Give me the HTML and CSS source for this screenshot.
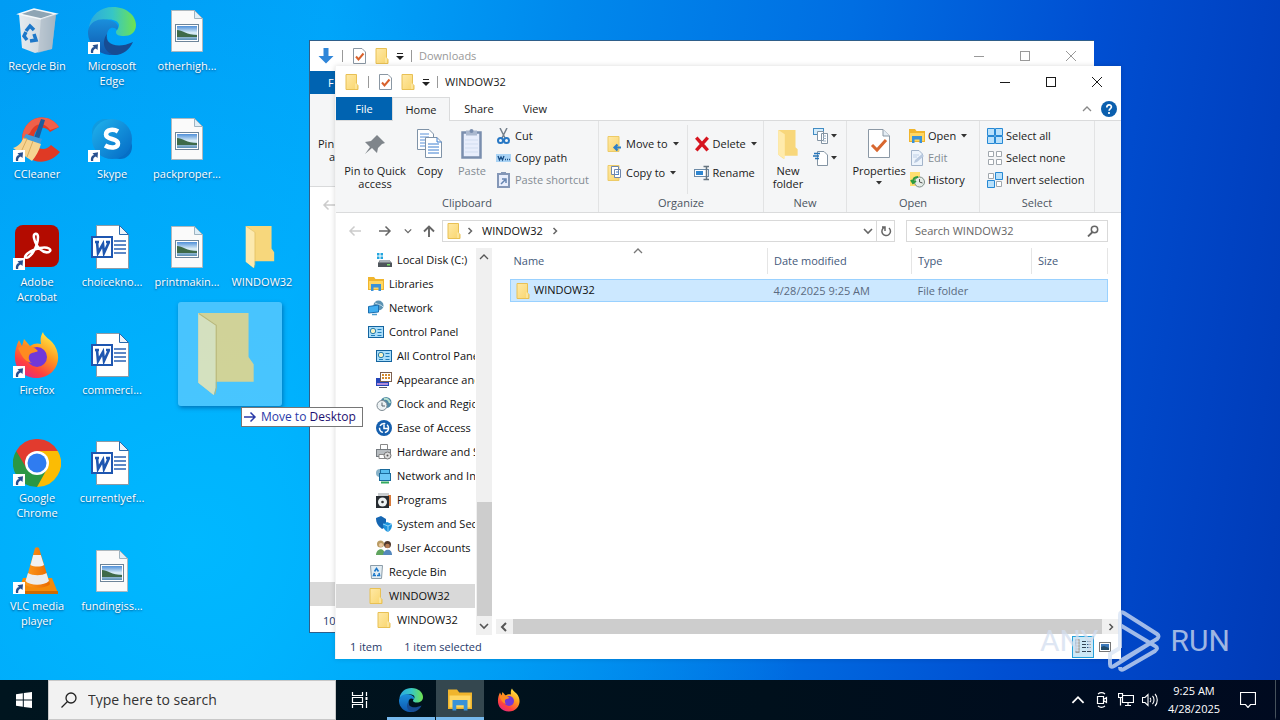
FILE: index.html
```
<!DOCTYPE html>
<html lang="en">
<head>
<meta charset="utf-8">
<title>Desktop</title>
<link rel="stylesheet" href="styles.css">
</head>
<body>
<svg class="defs" aria-hidden="true">
<defs>
<linearGradient id="gFold" x1="0" y1="0" x2="1" y2="1"><stop offset="0" stop-color="#ffe9a6"/><stop offset="1" stop-color="#f9d56c"/></linearGradient>
<linearGradient id="gBin" x1="0" y1="0" x2="1" y2="0"><stop offset="0" stop-color="#e6ecf0"/><stop offset="0.55" stop-color="#d3dbe1"/><stop offset="1" stop-color="#9fb4c3"/></linearGradient>
<linearGradient id="gEdgeA" x1="0" y1="0.3" x2="1" y2="0.3"><stop offset="0" stop-color="#2ba9df"/><stop offset="0.5" stop-color="#36c6c6"/><stop offset="1" stop-color="#6fe34f"/></linearGradient>
<linearGradient id="gEdgeB" x1="0" y1="0" x2="0" y2="1"><stop offset="0" stop-color="#1a8fdc"/><stop offset="1" stop-color="#0f57ad"/></linearGradient>
<linearGradient id="gSky" x1="0" y1="0" x2="0" y2="1"><stop offset="0" stop-color="#4f8fd8"/><stop offset="0.5" stop-color="#dff0f8"/><stop offset="1" stop-color="#5a8fb5"/></linearGradient>
<linearGradient id="gFox" x1="0.8" y1="0" x2="0.2" y2="1"><stop offset="0" stop-color="#fff04a"/><stop offset="0.4" stop-color="#ff9a1f"/><stop offset="0.75" stop-color="#ff4040"/><stop offset="1" stop-color="#e0258c"/></linearGradient>
<linearGradient id="gSkype" x1="0" y1="0" x2="1" y2="1"><stop offset="0" stop-color="#20b4ee"/><stop offset="1" stop-color="#0468c4"/></linearGradient>
<linearGradient id="gCone" x1="0" y1="0" x2="1" y2="0"><stop offset="0" stop-color="#ff9a1c"/><stop offset="1" stop-color="#e96a00"/></linearGradient>
</defs>
<symbol id="arrowbadge" viewBox="0 0 12 12"><rect width="12" height="12" fill="#fff"/><path d="M3 11C2.500 7 4 5.500 6 5L4.500 3.200 10 2.200 9.500 8 7.800 6.500C5.500 7.500 5 8.500 5.200 11Z" fill="#28508f"/></symbol>
<symbol id="bin" viewBox="0 0 48 48"><path d="M6 7 21 2l22 5-4 35-17 4-13-5Z" fill="url(#gBin)"/><path d="M6 7 21 2l22 5-15 5Z" fill="#8ea5b4" stroke="#f4f8fa" stroke-width="1.500"/><path d="M28 12l15-5-4 35-14 4Z" fill="#a8b7c2" opacity=".55"/><path d="M13 24l4-5 4 4M21 27l2 6-6 1M14 33l-3-4 2-4" fill="none" stroke="#1d78c9" stroke-width="3.500"/></symbol>
<symbol id="edge" viewBox="0 0 48 48"><path d="M1 20C3 8 12 0 25 0c14 0 23 9 23 18 0 8-6 11-12 11-5 0-8-1-8-4 0-2 3-3 3-7C30 12 17 9 1 20Z" fill="url(#gEdgeA)"/><path d="M0 24C2 13 13 11 21 13c8 2 11 6 8 10-3-4-10-3-10 6 0 8 6 15 12 18C14 52-1 39 0 24Z" fill="url(#gEdgeB)"/><path d="M19 27c-3 9 9 16 26 8-3 7-10 13-18 13C16 46 13 35 19 27Z" fill="#174c93"/></symbol>
<symbol id="imgdoc" viewBox="0 0 32 42"><path d="M0.500 0.500H23.500L31.500 8.500V41.500H.5Z" fill="#fafafa" stroke="#aeb8be"/><path d="M23.500.5V8.500H31.500Z" fill="#dfeef7" stroke="#9fb3c0"/><rect x="4.500" y="14.500" width="23" height="17" fill="#fff" stroke="#6d8499"/><rect x="6" y="16" width="20" height="14" fill="url(#gSky)"/><path d="M6 20c5 0 10 5 20 5v2H6Z" fill="#3e6a48"/></symbol>
<symbol id="worddoc" viewBox="0 0 38 44"><path d="M5.500.5H28.500L37.500 9.500V43.500H5.500Z" fill="#fff" stroke="#8d9aa6"/><path d="M28.500.5V9.500H37.500Z" fill="#edf3f8" stroke="#2b6aab"/><path d="M23 16h12M23 20h12M23 24h12M23 28h12" stroke="#2a62b4" stroke-width="1.300"/><rect x="1" y="12" width="20" height="20" fill="#fff" stroke="#1e56b0" stroke-width="2"/><path d="M4 17h4M6 17l1 11 5-9 1 9 5-11M15 17h4" fill="none" stroke="#1e56b0" stroke-width="2.600"/></symbol>
<symbol id="cc" viewBox="0 0 48 48"><path d="M46 12C36-4 10 0 9 24s24 30 38 13l-9-7c-7 8-17 3-17-7s10-14 16-6Z" fill="#df3a25"/><path d="M46 12C36-4 10 0 9 24l8-6c4-10 14-12 20-3Z" fill="#f0604a"/><path d="M28 4l4 1-6 19-5-1Z" fill="#1d5c9c"/><path d="M13 19l16 5-2 5-17-5Z" fill="#3f9bdd"/><path d="M10 23l18 6c-2 7-5 12-9 17L0 33c6-2 9-6 10-10Z" fill="#f6d491"/><path d="M10 23l4 1L8 37M20 26l-6 16" stroke="#d9ab5d" fill="none"/></symbol>
<symbol id="skype" viewBox="0 0 48 48"><circle cx="17" cy="17" r="13" fill="#109be0"/><circle cx="32" cy="32" r="12" fill="#066fc5"/><circle cx="24" cy="24" r="20" fill="url(#gSkype)"/><path d="M30 16.500c-4-2.500-12-2.500-12 3 0 6 12 3 12 9 0 5-8 5-13 2" fill="none" stroke="#fff" stroke-width="4.500"/></symbol>
<symbol id="acro" viewBox="0 0 48 48"><rect x="2" y="2" width="44" height="42" rx="8" fill="#b30b00"/><path d="M12 34c4 4 13-10 13-20 0-5-5-4-4 1 2 9 9 16 15 14 4-2-1-6-9-4-6 1-14 5-15 9Z" fill="none" stroke="#fff" stroke-width="2.500"/></symbol>
<symbol id="fox" viewBox="0 0 48 48"><path d="M30 1c1 4 5 6 9 10 8 9 8 21 1 29-9 10-26 9-34-1C0 31 1 19 6 9l3 6 2-7 6 7c4-3 8-3 11-2-1-5 0-9 2-12Z" fill="url(#gFox)"/><circle cx="24" cy="26" r="10" fill="#7138d8"/><path d="M5 17c7-5 16-2 20 3-3 2-8 1-9 5-1 3 1 6 3 7C10 30 8 23 5 17Z" fill="#ff8b20"/></symbol>
<symbol id="chrome" viewBox="0 0 48 48"><path d="M24 24H24L44.800 12A24 24 0 0 1 24 48Z" fill="#fbbc04"/><path d="M24 24L34 30 24 48A24 24 0 0 1 3.200 12Z" fill="#2a9744"/><path d="M24 12H44.800L34 30Z" fill="#fbbc04"/><path d="M24 12H44.800A24 24 0 0 0 3.200 12L14 30Z" fill="#e23b2e"/><circle cx="24" cy="24" r="12" fill="#fff"/><circle cx="24" cy="24" r="9.500" fill="#2f7cf0"/></symbol>
<symbol id="vlc" viewBox="0 0 48 48"><path d="M10 31H39L45 46H5Z" fill="#f58a0a"/><path d="M5 44H45V47H5Z" fill="#cf6a00"/><path d="M22 1c1-1 3-1 4 0L37 37c-4 5-21 5-25 0Z" fill="url(#gCone)"/><path d="M20.200 8H27.800L31 18c-3 2-10 2-13.500 0Z" fill="#f1f1f1"/><path d="M15 26c5 3 14 3 18.500 0L36 34c-5 5-19 5-23.500 0Z" fill="#ececec"/></symbol>
<symbol id="bigfold" viewBox="0 0 54 80"><path d="M0 0H49V43L54 50V67H15V80L0 68Z" fill="#f7d77c"/><path d="M0 0L17 11V73L15 80 0 68Z" fill="#fce9ae"/><path d="M.5.5L17.500 12V73L16 79.500" fill="none" stroke="#d9b555"/></symbol>
<symbol id="fold" viewBox="0 0 16 16"><path d="M2 .5H12.500V10L14 11.500V15.500H2Z" fill="url(#gFold)" stroke="#e8c054"/><path d="M12 9.500V15" stroke="#fdf0bd"/></symbol>
<symbol id="check" viewBox="0 0 16 16"><path d="M2.500.5H11L14.500 4V15.500H2.500Z" fill="#fff" stroke="#8a97a3"/><path d="M5 8.500l2.500 3 5-6" fill="none" stroke="#d8612c" stroke-width="2"/></symbol>
<symbol id="down" viewBox="0 0 16 16"><path d="M5.500 0H10.500V8H15.500L8 15.500.5 8H5.500Z" fill="#2f86d9"/></symbol>
<symbol id="qa" viewBox="0 0 8 8"><path d="M1 1.500H7" stroke="#222"/><path d="M0 4H8L4 8Z" fill="#222"/></symbol>
<symbol id="tri" viewBox="0 0 6 4"><path d="M0 0H6L3 3.500Z" fill="#333"/></symbol>
<symbol id="min" viewBox="0 0 10 10"><path d="M0 5.500H10" stroke="currentColor"/></symbol>
<symbol id="max" viewBox="0 0 10 10"><rect x=".5" y=".5" width="9" height="9" fill="none" stroke="currentColor"/></symbol>
<symbol id="close" viewBox="0 0 10 10"><path d="M0 0L10 10M10 0L0 10" stroke="currentColor"/></symbol>
<symbol id="chevU" viewBox="0 0 10 10"><path d="M1 7l4-4 4 4" fill="none" stroke="currentColor" stroke-width="1.300"/></symbol>
<symbol id="chevD" viewBox="0 0 10 10"><path d="M1 3l4 4 4-4" fill="none" stroke="currentColor" stroke-width="1.600"/></symbol>
<symbol id="chevR" viewBox="0 0 10 10"><path d="M3.500 2L6.500 5 3.500 8" fill="none" stroke="currentColor" stroke-width="1.500"/></symbol>
<symbol id="chevL" viewBox="0 0 10 10"><path d="M7 1L3 5l4 4" fill="none" stroke="currentColor" stroke-width="2"/></symbol>
<symbol id="arrL" viewBox="0 0 14 12"><path d="M13 6H2M6.500 1.500L2 6l4.500 4.500" fill="none" stroke="currentColor" stroke-width="1.500"/></symbol>
<symbol id="arrR" viewBox="0 0 14 12"><path d="M1 6H12M7.500 1.500L12 6l-4.500 4.500" fill="none" stroke="currentColor" stroke-width="1.500"/></symbol>
<symbol id="arrU" viewBox="0 0 12 12"><path d="M6 12V1.500M1 6.500L6 1.500l5 5" fill="none" stroke="currentColor" stroke-width="1.900"/></symbol>
<symbol id="pin" viewBox="0 0 24 24"><path d="M14 3l8 8-3 1-4 4-1 5-5-5-7 6 5-7-5-5 6-1 4-4Z" fill="#7f858b"/></symbol>
<symbol id="copy" viewBox="0 0 26 30"><path d="M.5.5H12L16.500 5V20.500H.5Z" fill="#fff" stroke="#7f93a8"/><path d="M3 5h9M3 8h9M3 11h9M3 14h9M3 17h9" stroke="#5b91d8"/><path d="M8.500 8.500H20L24.500 13V28.500H8.500Z" fill="#fff" stroke="#7f93a8"/><path d="M20 8.500V13h4.500M11 15h11M11 18h11M11 21h11M11 24h11" fill="none" stroke="#3d7fd0"/></symbol>
<symbol id="paste" viewBox="0 0 22 30"><rect x="1.500" y="3.500" width="18" height="25" fill="#e8eefc" stroke="#7a8eae" stroke-width="2.500"/><path d="M5 1.500h11v5H5Z" fill="#aab8cf"/><circle cx="10.500" cy="2" r="2" fill="#7a8eae"/><path d="M4 11h13M4 15h13M4 19h13M4 23h13" stroke="#d1ddf0"/></symbol>
<symbol id="cut" viewBox="0 0 16 16"><path d="M4 0l5 10M11 0L6 10" stroke="#75818d" stroke-width="1.500"/><circle cx="4.500" cy="12.500" r="2.500" fill="none" stroke="#2777c4" stroke-width="2"/><circle cx="10.500" cy="12.500" r="2.500" fill="none" stroke="#2777c4" stroke-width="2"/></symbol>
<symbol id="path" viewBox="0 0 16 16"><rect y="4" width="15" height="8" fill="#a9d3f5"/><path d="M2 6l1.500 4L5 7l1.500 3L8 6M9 9.500h1M11 9.500h1M13 9.500h1" fill="none" stroke="#174e87" stroke-width="1.300"/></symbol>
<symbol id="pshort" viewBox="0 0 16 16"><rect x="2" y="2" width="11" height="13" fill="#e8eefc" stroke="#8497b7" stroke-width="2"/><path d="M5 0h5v3H5Z" fill="#8497b7"/><path d="M5 12l4-4M6 7h4v4" fill="none" stroke="#6584b0" stroke-width="1.500"/></symbol>
<symbol id="moveto" viewBox="0 0 16 16"><path d="M1 .5H12V15.500H1Z" fill="url(#gFold)" stroke="#edcb67"/><path d="M14 11.500H8M10.500 8.500l-3 3 3 3" fill="none" stroke="#2d7fc8" stroke-width="2.200"/></symbol>
<symbol id="copyto" viewBox="0 0 16 16"><path d="M1 .5H12V15.500H1Z" fill="url(#gFold)" stroke="#edcb67"/><path d="M4.500 1.500h7v8h-7ZM7.500 4.500h6v8h-6Z" fill="#fff" stroke="#6f87ad"/><path d="M9 7h3M9 9.500h3" stroke="#4b83c6"/></symbol>
<symbol id="del" viewBox="0 0 14 14"><path d="M2 1.500L12 12.500M12 1.500L2 12.500" stroke="#d6151f" stroke-width="3"/></symbol>
<symbol id="rename" viewBox="0 0 16 16"><rect x=".5" y="4.500" width="14" height="7" fill="#fff" stroke="#6d8ba7"/><rect x="2" y="6" width="7" height="4" fill="#2f86d0"/><path d="M9.500 1.500H15M12.500 1.500V14.500M9.500 14.500H15" fill="none" stroke="#66747f" stroke-width="1.500"/></symbol>
<symbol id="newitem" viewBox="0 0 16 16"><rect x=".5" y=".5" width="10" height="6" fill="#d4ecfb" stroke="#418cc3"/><path d="M4.500 3.500h6v9h-6ZM8.500 5.500h6v10h-6Z" fill="#fff" stroke="#8494a3"/><path d="M10 8h3M10 10.500h3M10 13h3" stroke="#9fb3c6"/></symbol>
<symbol id="easy" viewBox="0 0 16 16"><path d="M4.500 1.500H11L14.500 5V15.500H4.500Z" fill="#fff" stroke="#8494a3"/><path d="M1 3.500h6M0 6h6M2 8.500h4" stroke="#2574b8" stroke-width="1.300"/></symbol>
<symbol id="newfold" viewBox="0 0 20 28"><path d="M1 1H17V17L19 19V25H6V28L1 24Z" fill="#f8d77b"/><path d="M1 1L7 5V28L1 24Z" fill="#ffebac"/></symbol>
<symbol id="props" viewBox="0 0 22 30"><path d="M.5.500H15L21.500 7V28.500H.5Z" fill="#fff" stroke="#8b98a5"/><path d="M15 .5V7h6.500" fill="#e4edf4" stroke="#8b98a5"/><path d="M4 16l5 5 9-10" fill="none" stroke="#d8672f" stroke-width="3"/></symbol>
<symbol id="lib" viewBox="0 0 16 16"><path d="M0 1H6L7.500 3H16V14H0Z" fill="#f0b52d"/><path d="M1 5H15V13H1Z" fill="#ffd763"/><path d="M3 8H13V15H10.500V11.500H5.500V15H3Z" fill="#3a92d8"/></symbol>
<symbol id="edit" viewBox="0 0 16 16"><path d="M2.500.5H10L13.500 4V15.500H2.500Z" fill="#edf4fc" stroke="#a3b4ca"/><path d="M5 13l1-3 7-6 2 2-7 6Z" fill="#b9c9df"/><path d="M4 5h6M4 7h4" stroke="#bfd0e6"/></symbol>
<symbol id="hist" viewBox="0 0 16 16"><path d="M1 0H11V14H1Z" fill="#ffdf70"/><circle cx="10.500" cy="10" r="5" fill="#e5ece8" stroke="#7b8b86"/><path d="M10.500 7v3l3 1" fill="none" stroke="#555"/><path d="M9 5c-4 0-5 3-5 5M2 8l2 3 3-2" fill="none" stroke="#2d9c3f" stroke-width="2"/></symbol>
<symbol id="selall" viewBox="0 0 16 16"><path d="M.5.5h7v7h-7ZM8.500.5h7v7h-7ZM.5 8.500h7v7h-7ZM8.500 8.500h7v7h-7Z" fill="#b9e1fb" stroke="#2688d4"/></symbol>
<symbol id="selnone" viewBox="0 0 16 16"><path d="M1.500 1.500h5v5h-5ZM9.500 1.500h5v5h-5ZM1.500 9.500h5v5h-5ZM9.500 9.500h5v5h-5Z" fill="#fff" stroke="#a0a7ad"/></symbol>
<symbol id="selinv" viewBox="0 0 16 16"><path d="M1.500 1.500h5v5h-5ZM9.500 9.500h5v5h-5Z" fill="#fff" stroke="#a0a7ad"/><path d="M8.500.5h7v7h-7ZM.5 8.500h7v7h-7Z" fill="#b9e1fb" stroke="#2688d4"/></symbol>
<symbol id="disk" viewBox="0 0 16 16"><path d="M1 1h2.500v2.500H1ZM4.500 1H7v2.500H4.500ZM1 4.500h2.500V7H1ZM4.500 4.500H7V7H4.500Z" fill="#23a6df"/><path d="M4 8H13L16 11V15H2V11Z" fill="#4f555b"/><path d="M4 8H13L15 10.500H3Z" fill="#aab1b7"/><rect x="11" y="12" width="3" height="1.500" fill="#7fe36c"/></symbol>
<symbol id="net" viewBox="0 0 16 16"><circle cx="10.500" cy="5.500" r="5" fill="#5d93b3"/><path d="M7 3c3 2 6 1 8 4" stroke="#c9e2ec" fill="none"/><path d="M.5 6.500L10.500 5V12L.5 13Z" fill="#41aef0" stroke="#1b6fb1"/><path d="M4 14.500h5" stroke="#4e9dce" stroke-width="1.500"/></symbol>
<symbol id="cpl" viewBox="0 0 16 16"><rect x=".5" y="2.500" width="15" height="11" fill="#a9ddfa" stroke="#14649f"/><circle cx="5" cy="7" r="2.700" fill="#f6f1c2" stroke="#287eaf"/><path d="M9.500 5.500h4M9.500 8.500h4M3 11.500h4M9.500 11.500h4" stroke="#207eba"/></symbol>
<symbol id="appear" viewBox="0 0 16 16"><rect x="0" y="6" width="13" height="8" fill="#2445b9"/><rect x="4.500" y=".5" width="11" height="9" fill="#fff" stroke="#7c6050"/><path d="M6 3h2M9 3h2M12 3h2M6 6h2M9 6h2M12 6h2" stroke="#d58b2d" stroke-width="2"/><path d="M1 12h11" stroke="#b08bd9" stroke-width="2"/><path d="M3 15.500h8" stroke="#556"/></symbol>
<symbol id="clock" viewBox="0 0 16 16"><circle cx="10" cy="6.500" r="5.500" fill="#4e86a3"/><path d="M8 3c3-1 5 1 6 4" fill="none" stroke="#b6e0cf" stroke-width="2"/><circle cx="6" cy="9.500" r="5" fill="#edf2f4" stroke="#7e8b93"/><path d="M6 6.500v3.500h3" fill="none" stroke="#56636b"/></symbol>
<symbol id="ease" viewBox="0 0 16 16"><circle cx="8" cy="8" r="8" fill="#155fae"/><circle cx="8" cy="8" r="4.500" fill="none" stroke="#fff" stroke-width="1.500" stroke-dasharray="6 2"/><path d="M8 4.500V8.500H12" stroke="#fff" fill="none" stroke-width="1.500"/></symbol>
<symbol id="printer" viewBox="0 0 16 16"><path d="M4.500.5h7v5h-7Z" fill="#fff" stroke="#888"/><rect x=".5" y="5.500" width="14" height="7" fill="#b8bdc1" stroke="#757b80"/><path d="M3 10.500h7v4H3Z" fill="#fff" stroke="#888"/><circle cx="11.500" cy="11.500" r="3.500" fill="#ddd" stroke="#777"/><circle cx="11.500" cy="11.500" r="1" fill="#555"/></symbol>
<symbol id="netint" viewBox="0 0 16 16"><circle cx="4" cy="5" r="4" fill="#88b2c8"/><rect x="4.500" y="1.500" width="9" height="7" fill="#59bff0" stroke="#1b6b9c"/><rect x="3.500" y="5.500" width="11" height="7" fill="#6cc8f6" stroke="#1b6b9c"/><path d="M5 14.500h8" stroke="#33a95f" stroke-width="2"/></symbol>
<symbol id="prog" viewBox="0 0 16 16"><path d="M2 1H13V5H2Z" fill="#c9cdcf"/><path d="M12 3h3v11h-3Z" fill="#d77b3d"/><rect x="0" y="4" width="13" height="12" fill="#262b30"/><circle cx="6.500" cy="10" r="4.500" fill="#eef2f3"/><circle cx="6.500" cy="10" r="1.300" fill="#333"/></symbol>
<symbol id="sec" viewBox="0 0 16 16"><path d="M0 2L5 0l5 3v5c0 3-2 4-4 5C2 10 0 7 0 2Z" fill="#1566b2"/><path d="M7 8l4-2 5 2c0 4-1 6-4 8-3-1-5-4-5-8Z" fill="#1d93dd"/><path d="M7 8l5 2 4-2M12 10v6" stroke="#93d2f5" fill="none"/></symbol>
<symbol id="users" viewBox="0 0 16 16"><circle cx="4.500" cy="4" r="3.500" fill="#b99b62"/><circle cx="5" cy="5" r="2" fill="#edc8a2"/><path d="M0 15c0-6 8-9 9 0Z" fill="#5fa45e"/><circle cx="11.500" cy="4.500" r="3.500" fill="#50382b"/><circle cx="11.500" cy="6" r="2.300" fill="#b47b54"/><path d="M7 15c0-6 9-8 9 0Z" fill="#5588bd"/></symbol>
<symbol id="sbin" viewBox="0 0 16 16"><path d="M2.500 1.500h12l-1 13H3.500Z" fill="#e3edf3" stroke="#8b9ca8"/><path d="M6.500 7.500L8.500 4.500l2 3M11 9l.5 2.500H9M6.500 9L5.500 11.500H8" fill="none" stroke="#1d78c9" stroke-width="1.600"/></symbol>
<symbol id="mag" viewBox="0 0 16 16"><circle cx="10" cy="6" r="5" fill="none" stroke="currentColor" stroke-width="1.300"/><path d="M6.500 9.500L.5 15.500" stroke="currentColor" stroke-width="1.300"/></symbol>
<symbol id="maghv" viewBox="0 0 12 12"><circle cx="7.500" cy="4.500" r="3.200" fill="none" stroke="#666" stroke-width="1.500"/><path d="M5.500 7L1 11.500" stroke="#666" stroke-width="1.800"/></symbol>
<symbol id="refresh" viewBox="0 0 12 12"><path d="M9 3A4.300 4.300 0 1 1 4.500 2.300M2 2h3v4" fill="none" stroke="#666" stroke-width="1.500"/></symbol>
<symbol id="help" viewBox="0 0 16 16"><circle cx="8" cy="8" r="8" fill="#0b5fae"/><path d="M5.800 6.500c0-3.500 4.600-3.200 4.600-.5 0 1.500-2.300 1.800-2.300 3.800M8 11v2" stroke="#fff" stroke-width="1.700" fill="none"/></symbol>
<symbol id="details" viewBox="0 0 16 16"><path d="M.5 1h4M.5 4h4M.5 7h4M.5 10h4M.5 13h4" stroke="#888"/><path d="M1 .5h3v13H1Z" fill="none" stroke="#999"/><path d="M7 2.500h4M12 2.500h4M7 5.500h4M12 5.500h4M7 8.500h4M12 8.500h4M7 12.500h4M12 12.500h4" stroke="#345"/></symbol>
<symbol id="thumbs" viewBox="0 0 12 10"><rect x=".5" y=".5" width="11" height="9" fill="#fff" stroke="#777"/><rect x="2" y="2" width="8" height="6" fill="#3c79ba"/><path d="M2 5l3-1 5 2v2H2Z" fill="#234d6b"/></symbol>
<symbol id="win" viewBox="0 0 16 16"><path d="M0 2.200L6.800 1.200V7.500H0ZM7.800 1L16 0V7.500H7.800ZM0 8.500H6.800V14.800L0 13.800ZM7.800 8.500H16V16L7.800 15Z" fill="#fff"/></symbol>
<symbol id="tview" viewBox="0 0 18 16"><path d="M1.500 0v3.500h10V0M1.500 16v-3.500h10V16M1.500 5.500h10v5h-10ZM15.500 0v4M15.500 9v7" fill="none" stroke="#fff" stroke-width="1.200"/><path d="M14.500 5h2v3h-2Z" fill="#fff"/></symbol>
<symbol id="meet" viewBox="0 0 16 16"><path d="M3.500 4.500h6v7h-6ZM9.500 7.500l3-2v5l-3-2M4 2c2-1.500 5-1.500 7 0M4 14c2 1.500 5 1.500 7 0" fill="none" stroke="#fff" stroke-width="1.200"/></symbol>
<symbol id="lan" viewBox="0 0 16 16"><path d="M5 3.500h10.500v7H4.500V6M7 13.500h6M10 10.500v3M.5 1.500h4v4h-4ZM2.500 5.500v8" fill="none" stroke="#fff" stroke-width="1.200"/></symbol>
<symbol id="vol" viewBox="0 0 16 16"><path d="M.5 5.500h2.500l3-3v11l-3-3H.5ZM8 6c1 1 1 3 0 4M10.500 4c2 2 2 6 0 8M13 2c3 3 3 9 0 12" fill="none" stroke="#fff" stroke-width="1.100"/></symbol>
<symbol id="note" viewBox="0 0 16 16"><path d="M.5.5h15v12h-5L8 15.500 5.500 12.500h-5Z" fill="none" stroke="#fff" stroke-width="1.200"/></symbol>
<symbol id="play" viewBox="0 0 56 62"><path d="M13 38V5Q13 1 17 3L50 24Q53 26 50 29L13 51M13 15L48 36Q52 38 48 41L17 59Q13 61 13 57M13 38L3 44V54Q3 58 7 56L45 32" fill="none" stroke="#d7e3f5" stroke-width="4"/></symbol>
</svg>

<main class="desktop">
  <div class="shortcuts">
    <a href="#" class="sc"><svg class="i48"><use href="#bin"/></svg><span>Recycle Bin</span></a>
    <a href="#" class="sc"><svg class="i48"><use href="#cc"/></svg><svg class="badge"><use href="#arrowbadge"/></svg><span>CCleaner</span></a>
    <a href="#" class="sc"><svg class="i48"><use href="#acro"/></svg><svg class="badge"><use href="#arrowbadge"/></svg><span>Adobe Acrobat</span></a>
    <a href="#" class="sc"><svg class="i48"><use href="#fox"/></svg><svg class="badge"><use href="#arrowbadge"/></svg><span>Firefox</span></a>
    <a href="#" class="sc"><svg class="i48"><use href="#chrome"/></svg><svg class="badge"><use href="#arrowbadge"/></svg><span>Google Chrome</span></a>
    <a href="#" class="sc"><svg class="i48"><use href="#vlc"/></svg><svg class="badge"><use href="#arrowbadge"/></svg><span>VLC media player</span></a>
    <a href="#" class="sc"><svg class="i48"><use href="#edge"/></svg><svg class="badge"><use href="#arrowbadge"/></svg><span>Microsoft Edge</span></a>
    <a href="#" class="sc"><svg class="i48"><use href="#skype"/></svg><svg class="badge"><use href="#arrowbadge"/></svg><span>Skype</span></a>
    <a href="#" class="sc"><svg class="i48 word"><use href="#worddoc"/></svg><span>choicekno...</span></a>
    <a href="#" class="sc"><svg class="i48 word"><use href="#worddoc"/></svg><span>commerci...</span></a>
    <a href="#" class="sc"><svg class="i48 word"><use href="#worddoc"/></svg><span>currentlyef...</span></a>
    <a href="#" class="sc"><svg class="i48 img"><use href="#imgdoc"/></svg><span>fundingiss...</span></a>
    <a href="#" class="sc"><svg class="i48 img"><use href="#imgdoc"/></svg><span>otherhigh...</span></a>
    <a href="#" class="sc"><svg class="i48 img"><use href="#imgdoc"/></svg><span>packproper...</span></a>
    <a href="#" class="sc"><svg class="i48 img"><use href="#imgdoc"/></svg><span>printmakin...</span></a>
    <a href="#" class="sc fourth"><svg class="i48 img"><use href="#bigfold"/></svg><span>WINDOW32</span></a>
  </div>

  <section class="window back" aria-label="Downloads">
    <header class="titlebar">
      <svg class="i16"><use href="#down"/></svg><i class="tsep"></i>
      <svg class="i16"><use href="#check"/></svg><svg class="i16"><use href="#fold"/></svg><svg class="i8"><use href="#qa"/></svg><i class="tsep"></i>
      <span class="title">Downloads</span>
      <button class="cap" aria-label="Minimize"><svg class="i10"><use href="#min"/></svg></button>
      <button class="cap" aria-label="Maximize"><svg class="i10"><use href="#max"/></svg></button>
      <button class="cap" aria-label="Close"><svg class="i10"><use href="#close"/></svg></button>
    </header>
    <div class="strip">
      <div class="striptab">F</div>
      <div class="stripribbon">Pin<br><span>a</span></div>
      <div class="stripnav"><svg class="arr"><use href="#arrL"/></svg></div>
      <div class="stripsel"></div>
      <div class="stripstatus">10</div>
    </div>
  </section>

  <section class="window front" aria-label="WINDOW32">
    <header class="titlebar">
      <svg class="i16"><use href="#fold"/></svg><i class="tsep"></i>
      <svg class="i16"><use href="#check"/></svg><svg class="i16"><use href="#fold"/></svg><svg class="i8"><use href="#qa"/></svg><i class="tsep"></i>
      <span class="title">WINDOW32</span>
      <button class="cap" aria-label="Minimize"><svg class="i10"><use href="#min"/></svg></button>
      <button class="cap" aria-label="Maximize"><svg class="i10"><use href="#max"/></svg></button>
      <button class="cap" aria-label="Close"><svg class="i10"><use href="#close"/></svg></button>
    </header>
    <nav class="tabs">
      <button class="tab file">File</button><button class="tab on">Home</button><button class="tab">Share</button><button class="tab">View</button>
      <button class="fold" aria-label="Collapse ribbon"><svg class="i10"><use href="#chevU"/></svg></button>
      <button class="help" aria-label="Help"><svg class="i16"><use href="#help"/></svg></button>
    </nav>
    <div class="ribbon">
      <div class="group clip">
        <div class="tools">
          <button class="big wide"><svg class="i32 pinic"><use href="#pin"/></svg>Pin to Quick access</button>
          <button class="big"><svg class="i32"><use href="#copy"/></svg>Copy</button>
          <button class="big off"><svg class="i32"><use href="#paste"/></svg>Paste</button>
          <div class="col">
            <button class="small"><svg class="i16"><use href="#cut"/></svg>Cut</button>
            <button class="small"><svg class="i16"><use href="#path"/></svg>Copy path</button>
            <button class="small off"><svg class="i16"><use href="#pshort"/></svg>Paste shortcut</button>
          </div>
        </div>
        <div class="gname">Clipboard</div>
      </div>
      <div class="group org">
        <div class="tools">
          <div class="col tall">
            <button class="small"><svg class="i16"><use href="#moveto"/></svg>Move to<svg class="tri"><use href="#tri"/></svg></button>
            <button class="small"><svg class="i16"><use href="#copyto"/></svg>Copy to<svg class="tri"><use href="#tri"/></svg></button>
          </div>
          <div class="col tall right">
            <button class="small"><svg class="i16"><use href="#del"/></svg>Delete<svg class="tri"><use href="#tri"/></svg></button>
            <button class="small"><svg class="i16"><use href="#rename"/></svg>Rename</button>
          </div>
        </div>
        <div class="gname">Organize</div>
      </div>
      <div class="group new">
        <div class="tools">
          <button class="big"><svg class="i32"><use href="#newfold"/></svg>New folder</button>
          <div class="col">
            <button class="small" aria-label="New item"><svg class="i16"><use href="#newitem"/></svg><svg class="tri"><use href="#tri"/></svg></button>
            <button class="small" aria-label="Easy access"><svg class="i16"><use href="#easy"/></svg><svg class="tri"><use href="#tri"/></svg></button>
          </div>
        </div>
        <div class="gname">New</div>
      </div>
      <div class="group open">
        <div class="tools">
          <button class="big prop"><svg class="i32"><use href="#props"/></svg>Properties<svg class="tri"><use href="#tri"/></svg></button>
          <div class="col">
            <button class="small"><svg class="i16"><use href="#lib"/></svg>Open<svg class="tri"><use href="#tri"/></svg></button>
            <button class="small off"><svg class="i16"><use href="#edit"/></svg>Edit</button>
            <button class="small"><svg class="i16"><use href="#hist"/></svg>History</button>
          </div>
        </div>
        <div class="gname">Open</div>
      </div>
      <div class="group sel">
        <div class="tools">
          <div class="col">
            <button class="small"><svg class="i16"><use href="#selall"/></svg>Select all</button>
            <button class="small"><svg class="i16"><use href="#selnone"/></svg>Select none</button>
            <button class="small"><svg class="i16"><use href="#selinv"/></svg>Invert selection</button>
          </div>
        </div>
        <div class="gname">Select</div>
      </div>
    </div>
    <div class="address">
      <button class="nb dim" aria-label="Back"><svg class="arr"><use href="#arrL"/></svg></button>
      <button class="nb" aria-label="Forward"><svg class="arr"><use href="#arrR"/></svg></button>
      <button class="nb recent" aria-label="Recent"><svg class="i8"><use href="#chevD"/></svg></button>
      <button class="nb up" aria-label="Up"><svg class="i12"><use href="#arrU"/></svg></button>
      <div class="crumbs"><svg class="i16"><use href="#fold"/></svg><svg class="i10"><use href="#chevR"/></svg><a href="#">WINDOW32</a><svg class="i10"><use href="#chevR"/></svg>
        <button class="drop" aria-label="Previous locations"><svg class="i10"><use href="#chevD"/></svg></button>
        <button class="refresh" aria-label="Refresh"><svg class="i12"><use href="#refresh"/></svg></button>
      </div>
      <label class="find"><input type="text" placeholder="Search WINDOW32" aria-label="Search WINDOW32"><svg class="i12"><use href="#maghv"/></svg></label>
    </div>
    <div class="panes">
      <ul class="tree">
        <li class="l2"><svg class="i16"><use href="#disk"/></svg>Local Disk (C:)</li>
        <li><svg class="i16"><use href="#lib"/></svg>Libraries</li>
        <li><svg class="i16"><use href="#net"/></svg>Network</li>
        <li><svg class="i16"><use href="#cpl"/></svg>Control Panel</li>
        <li class="l2"><svg class="i16"><use href="#cpl"/></svg>All Control Panel Items</li>
        <li class="l2"><svg class="i16"><use href="#appear"/></svg>Appearance and Personalization</li>
        <li class="l2"><svg class="i16"><use href="#clock"/></svg>Clock and Region</li>
        <li class="l2"><svg class="i16"><use href="#ease"/></svg>Ease of Access</li>
        <li class="l2"><svg class="i16"><use href="#printer"/></svg>Hardware and Sound</li>
        <li class="l2"><svg class="i16"><use href="#netint"/></svg>Network and Internet</li>
        <li class="l2"><svg class="i16"><use href="#prog"/></svg>Programs</li>
        <li class="l2"><svg class="i16"><use href="#sec"/></svg>System and Security</li>
        <li class="l2"><svg class="i16"><use href="#users"/></svg>User Accounts</li>
        <li><svg class="i16"><use href="#sbin"/></svg>Recycle Bin</li>
        <li class="cur"><svg class="i16"><use href="#fold"/></svg>WINDOW32</li>
        <li class="l2"><svg class="i16"><use href="#fold"/></svg>WINDOW32</li>
      </ul>
      <div class="vscroll"><svg class="i10"><use href="#chevU"/></svg><div class="vthumb"></div><svg class="i10"><use href="#chevD"/></svg></div>
      <div class="files">
        <table>
          <colgroup><col><col class="cdate"><col class="ctype"><col class="csize"></colgroup>
          <thead><tr><th>Name<svg class="sort"><use href="#chevU"/></svg></th><th>Date modified</th><th>Type</th><th>Size</th></tr></thead>
          <tbody><tr><td class="nm"><svg class="i16"><use href="#fold"/></svg>WINDOW32</td><td>4/28/2025 9:25 AM</td><td>File folder</td><td></td></tr></tbody>
        </table>
        <div class="hscroll"><svg class="i10"><use href="#chevL"/></svg><div class="hthumb"></div><svg class="i10"><use href="#chevR"/></svg></div>
      </div>
    </div>
    <footer class="status"><span>1 item</span><span>1 item selected</span>
      <button class="view on" aria-label="Details"><svg class="i16"><use href="#details"/></svg></button>
      <button class="view" aria-label="Thumbnails"><svg class="i12"><use href="#thumbs"/></svg></button>
    </footer>
  </section>

  <div class="drag"><svg><use href="#bigfold"/></svg></div>
  <div class="tip"><svg class="arr"><use href="#arrR"/></svg><span>Move to <b>Desktop</b></span></div>
  <div class="mark"><span>ANY</span><svg><use href="#play"/></svg><span>RUN</span></div>
</main>

<footer class="taskbar">
  <button class="tb start" aria-label="Start"><svg class="i16"><use href="#win"/></svg></button>
  <label class="search"><svg class="i16"><use href="#mag"/></svg><input type="text" placeholder="Type here to search" aria-label="Search"></label>
  <button class="tb" aria-label="Task view"><svg class="tv"><use href="#tview"/></svg></button>
  <button class="tb run edge" aria-label="Edge"><svg class="i24"><use href="#edge"/></svg></button>
  <button class="tb run active" aria-label="File Explorer"><svg class="i24"><use href="#lib"/></svg></button>
  <button class="tb" aria-label="Firefox"><svg class="i24"><use href="#fox"/></svg></button>
  <div class="tray">
    <svg class="i16 cv"><use href="#chevU"/></svg><svg class="i16"><use href="#meet"/></svg><svg class="i16"><use href="#lan"/></svg><svg class="i16"><use href="#vol"/></svg>
    <div class="clock">9:25 AM<br>4/28/2025</div>
    <button class="tb nt" aria-label="Notifications"><svg class="i16"><use href="#note"/></svg></button>
  </div>
</footer>
</body>
</html>
```
FILE: styles.css
```
* { box-sizing: border-box; }
body {
  margin: 0;
  height: 100vh;
  display: flex;
  flex-direction: column;
  overflow: hidden;
  font: 11px/16px "Open Sans", "Noto Sans", sans-serif;
  color: #1a1a1a;
}
button, input { font: inherit; color: inherit; border: 0; padding: 0; margin: 0; background: none; }
svg { display: block; flex: none; }
.defs { position: absolute; width: 0; height: 0; }
.i8 { width: 8px; height: 8px; }
.i10 { width: 10px; height: 10px; }
.i12 { width: 12px; height: 12px; }
.i16 { width: 16px; height: 16px; }
.i24 { width: 24px; height: 24px; }
.i32 { width: 32px; height: 30px; }
.i48 { width: 48px; height: 48px; }
.arr { width: 14px; height: 12px; }
.tri { width: 6px; height: 4px; }

.desktop {
  flex: 1;
  position: relative;
  overflow: hidden;
  background:
    radial-gradient(ellipse 620px 560px at 15% 80%, #00b8ff 0%, rgba(0, 180, 255, 0) 100%),
    linear-gradient(98deg, #009cf4 0%, #00a4fa 24%, #0088ec 42%, #006ee2 62%, #004fd2 80%, #0042c2 92%, #003ab6 100%);
}
.shortcuts {
  display: grid;
  grid-template-rows: repeat(6, 108px);
  grid-auto-flow: column;
  grid-auto-columns: 75px;
}
.sc {
  position: relative;
  display: flex;
  flex-direction: column;
  align-items: center;
  padding: 7px 2px 0 1px;
  color: #fff;
  text-decoration: none;
  text-align: center;
  line-height: 15px;
  text-shadow: 0 1px 2px rgba(0, 40, 90, .7);
}
.sc span { margin-top: 3px; max-width: 75px; }
.sc .img { height: 42px; margin: 3px 0; }
.sc .word { height: 44px; margin: 2px 5px 2px 0; }
.badge { position: absolute; left: 13px; top: 42px; width: 12px; height: 12px; }
.fourth { grid-column: 4; grid-row: 3; }
.sc.fourth .img { margin-right: 5px; }

.window { position: absolute; background: #fff; display: flex; flex-direction: column; }
.front { left: 335px; top: 66px; width: 786px; height: 593px; border-left: 1px solid #f4f4f4; box-shadow: 0 0 5px rgba(0, 0, 0, .15); }
.back { left: 309px; top: 40px; width: 785px; height: 593px; border: 1px solid #2f5f8a; border-right: 0; }
.titlebar { display: flex; align-items: center; height: 31px; flex: none; padding-left: 8px; }
.front .titlebar { padding-right: 1px; }
.back .titlebar { color: #999; height: 30px; }
.tsep { width: 1px; height: 12px; background: #999; margin: 0 8px; }
.titlebar .i16 + .i16 { margin-left: 7px; }
.titlebar .i8 { margin-left: 6px; }
.titlebar .i8 + .tsep { margin: 0 7px; }
.title { flex: 1; }
.cap { width: 46px; display: flex; justify-content: center; }
.strip { width: 26px; overflow: hidden; display: flex; flex-direction: column; flex: 1; }
.striptab { background: #0063b1; color: #fff; height: 23px; padding: 4px 0 0 18px; }
.stripribbon { background: #f5f6f7; border-bottom: 1px solid #d9dadb; height: 93px; padding: 43px 0 0 8px; line-height: 13px; }
.stripribbon span { padding-left: 11px; }
.stripnav { height: 36px; padding: 12px 0 0 12px; color: #ccc; flex: 1; }
.stripsel { height: 24px; background: #d9d9d9; }
.stripstatus { height: 26px; padding: 7px 0 0 13px; color: #1f3a6a; }

.tabs { display: flex; height: 24px; flex: none; align-items: stretch; background: #fff; }
.tab { width: 56px; }
.tab.file { background: #0063b1; color: #fff; }
.tab.on { position: relative; z-index: 1; width: 58px; margin-right: 1px; background: #f5f6f7; border: 1px solid #dadbdc; border-bottom: 0; }
.fold { margin-left: auto; color: #888; display: flex; align-items: center; }
.help { display: flex; align-items: center; padding: 0 4px 0 9px; }
.ribbon { display: flex; height: 93px; flex: none; background: #f5f6f7; border-top: 1px solid #dadbdc; border-bottom: 1px solid #dadbdc; margin-top: -1px; }
.group { display: flex; flex-direction: column; border-right: 1px solid #e2e3e4; }
.clip { width: 263px; }
.org { width: 165px; }
.new { width: 83px; }
.open { width: 133px; }
.sel { width: 115px; }
.tools { display: flex; flex: 1; padding: 4px 0 0 5px; }
.gname { text-align: center; color: #4b5460; height: 18px; line-height: 18px; }
.big { display: flex; flex-direction: column; align-items: center; width: 42px; line-height: 13px; padding-top: 4px; }
.big .i32 { margin-bottom: 5px; }
.wide { width: 68px; }
.pinic { padding: 3px; }
.off { color: #838b93; }
.col { display: flex; flex-direction: column; margin-left: 3px; }
.small { display: flex; align-items: center; height: 22px; gap: 3px; white-space: nowrap; }
.small .tri { margin-left: 2px; }
.org .col { padding-top: 4px; }
.tall .small { height: 29px; }
.org .right { border-left: 1px solid #e2e3e4; margin-left: 8px; padding-left: 6px; }
.new .big { width: 38px; }
.new .col { margin-left: 6px; }
.new .small { gap: 0; }
.prop { width: 54px; }
.prop .tri { margin-top: 4px; }
.sel .tools { padding-left: 4px; }

.address { display: flex; height: 35px; flex: none; align-items: center; padding: 0 13px 0 4px; color: #666; }
.nb { width: 30px; display: flex; justify-content: center; }
.nb.dim { color: #ccc; }
.nb.recent { width: 16px; }
.nb.up { width: 26px; }
.crumbs { flex: 1; display: flex; align-items: center; height: 22px; border: 1px solid #d9d9d9; padding-left: 3px; }
.crumbs .i10 { margin: 0 7px 0 3px; }
.crumbs a { color: #111; text-decoration: none; }
.crumbs a + .i10 { margin-left: 7px; }
.drop { margin-left: auto; }
.crumbs .drop .i10 { margin: 0 3px; }
.refresh { border-left: 1px solid #d9d9d9; height: 20px; padding: 0 2px 0 3px; }
.find { display: flex; align-items: center; width: 202px; height: 22px; border: 1px solid #d9d9d9; margin-left: 11px; padding: 0 8px; }
.find input { flex: 1; min-width: 0; }
.find input::placeholder { color: #666; opacity: 1; }

.panes { display: flex; flex: 1; min-height: 0; }
.tree { width: 139px; margin: 0; padding: 0; list-style: none; overflow: hidden; color: #111; }
.tree li { display: flex; align-items: center; gap: 5px; height: 24px; padding-left: 32px; white-space: nowrap; }
.tree .l2 { padding-left: 40px; }
.tree .cur { background: #d9d9d9; }
.vscroll { width: 16px; margin-left: 1px; background: #f0f0f0; display: flex; flex-direction: column; align-items: center; padding: 4px 0; color: #555; }
.vthumb { margin: auto 0 5px; width: 15px; height: 114px; background: #cdcdcd; }
.files { flex: 1; min-width: 0; display: flex; flex-direction: column; padding-left: 4px; }
table { table-layout: fixed; border-collapse: collapse; margin: 0 13px 0 14px; }
.cdate { width: 144px; }
.ctype { width: 120px; }
.csize { width: 76px; }
th { position: relative; text-align: left; font-weight: 400; color: #44597a; height: 26px; padding: 0 0 0 6px; border-right: 1px solid #e5e5e5; }
th:first-child { padding-left: 3px; }
.sort { position: absolute; left: 122px; top: -2px; width: 10px; height: 10px; color: #777; }
thead::after { content: ""; display: block; height: 5px; }
td { height: 22px; padding: 0 0 0 6px; color: #5a6a80; background: #cce8ff; border-top: 1px solid #99d1ff; border-bottom: 1px solid #99d1ff; }
td:first-child { border-left: 1px solid #99d1ff; }
td:last-child { border-right: 1px solid #99d1ff; }
.nm { color: #111; padding-left: 4px; }
.nm .i16 { display: inline-block; vertical-align: middle; margin-right: 3px; }
.hscroll { margin: auto 2px 1px 0; height: 15px; display: flex; align-items: center; background: #f0f0f0; color: #555; padding: 0 3px; gap: 4px; }
.hthumb { flex: 1; height: 15px; background: #cdcdcd; }
.status { height: 24px; flex: none; display: flex; align-items: center; color: #1f3a6a; padding: 0 5px 0 14px; }
.status span { margin-right: 22px; }
.view { width: 22px; height: 22px; display: flex; align-items: center; justify-content: center; }
.view.on { margin-left: auto; background: #cce8f6; border: 1px solid #26a0da; }

.drag {
  position: absolute; left: 178px; top: 302px; width: 104px; height: 104px;
  background: rgba(120, 210, 255, .6); border-radius: 3px; box-shadow: 1px 2px 4px rgba(0, 60, 120, .5);
  display: flex; align-items: center; justify-content: center;
}
.drag svg { width: 56px; height: 82px; opacity: .78; margin-right: 9px; }
.tip { position: absolute; left: 241px; top: 407px; height: 20px; display: flex; align-items: center; gap: 4px; padding: 0 6px 0 1px; background: #fff; border: 1px solid #767676; color: #2a3aa8; }
.tip span { font-size: 12px; }
.tip b { font-weight: 400; color: #1c1070; }
.mark { position: absolute; left: 1040px; top: 610px; display: flex; align-items: center; gap: 6px; color: #d3deef; opacity: .75; font: 30px/62px Roboto, "Liberation Sans", sans-serif; }
.mark svg { width: 60px; height: 62px; }

.taskbar { height: 40px; flex: none; display: flex; background: linear-gradient(90deg, #00151f, #00101c 60%, #000a20); color: #fff; }
.tb { width: 48px; display: flex; align-items: center; justify-content: center; border-bottom: 3px solid transparent; padding-top: 3px; }
.search { width: 288px; display: flex; align-items: center; gap: 11px; background: #f2f2f2; border: 1px solid #c8c8c8; padding-left: 12px; color: #222; }
.search input { flex: 1; min-width: 0; font-size: 14px; }
.search input::placeholder { color: #333; opacity: 1; }
.edge { margin: 0 1px 0 3px; }
.run { border-bottom-color: #76b9ed; }
.active { background: #34474f; margin-right: 1px; }
.tv { width: 18px; height: 16px; }
.tray { margin-left: auto; display: flex; align-items: center; }
.tray > .i16 { margin-right: 8px; }
.cv { padding: 1px; }
.clock { width: 56px; text-align: center; line-height: 18px; white-space: nowrap; }
.tray .nt { width: 54px; height: 40px; margin-right: 4px; padding-right: 2px; border-right: 1px solid #46525c; }
```
